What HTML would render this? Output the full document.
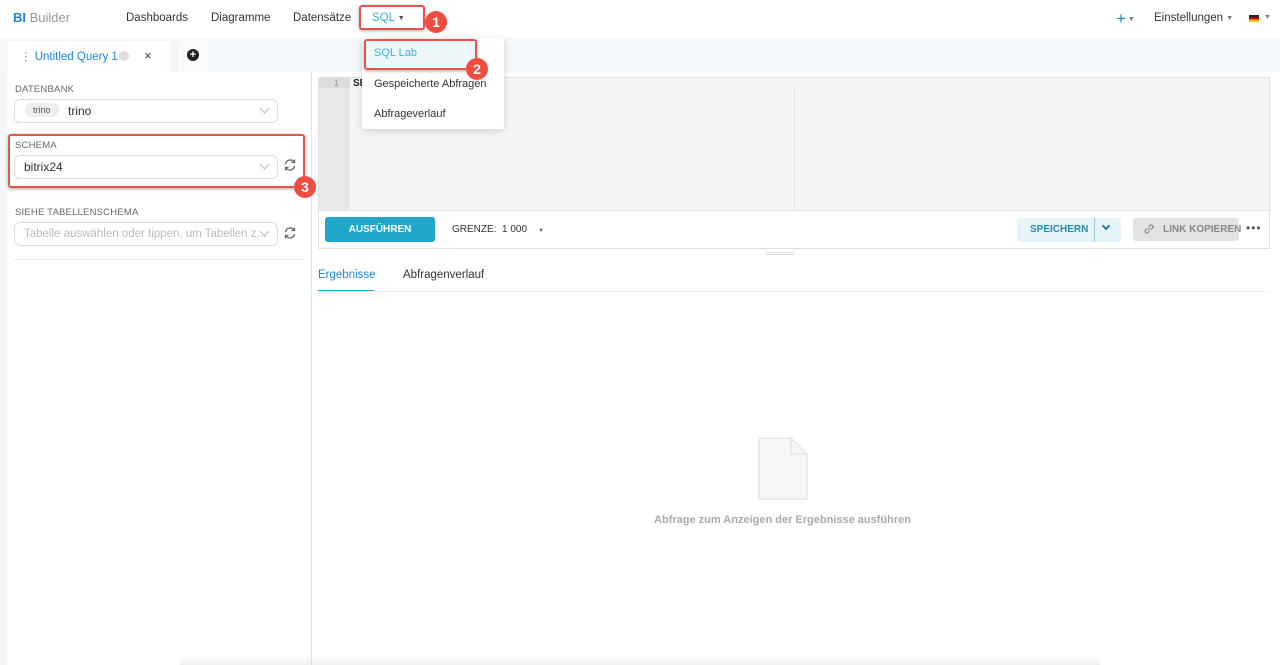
<!DOCTYPE html>
<html><head><meta charset="utf-8"><style>
*{box-sizing:border-box;margin:0;padding:0}
body{width:1280px;height:665px;overflow:hidden;background:#fff;font-family:"Liberation Sans",sans-serif;color:#333;position:relative;font-size:12px}
.a{position:absolute}
.nav{font-size:11.5px;color:#333;top:12px}
.lbl{font-size:9.5px;color:#666;letter-spacing:.2px}
.sel{border:1px solid #ddd;border-radius:6px;background:#fff;height:24px}
.chev{position:absolute;right:9px;top:5px;width:7px;height:7px;border-right:1px solid #bbb;border-bottom:1px solid #bbb;transform:rotate(45deg)}
.red{border:2px solid #e4544b;border-radius:3px;box-shadow:0 1px 3px rgba(0,0,0,.35)}
.badge{width:22px;height:22px;border-radius:50%;background:#ef4d3f;color:#fff;font-size:14px;text-align:center;line-height:22px;font-weight:bold}
</style></head><body>
<div class="a" style="left:13px;top:10px;font-size:13px"><b style="color:#1f86d6">BI</b> <span style="color:#999">Builder</span></div>
<div class="a nav" style="left:126px">Dashboards</div>
<div class="a nav" style="left:211px">Diagramme</div>
<div class="a nav" style="left:293px">Datensätze</div>
<div class="a red" style="left:359px;top:5px;width:66px;height:25px"></div>
<div class="a nav" style="left:372px;color:#3fb0d0">SQL <span style="font-size:7px;color:#555;vertical-align:1px">▼</span></div>
<div class="a badge" style="left:425px;top:11px">1</div>
<div class="a" style="left:1116px;top:9px;font-size:17px;color:#1a8fb5">+<span style="font-size:7px;color:#777;vertical-align:3px"> ▼</span></div>
<div class="a nav" style="left:1154px">Einstellungen <span style="font-size:7px;color:#777;vertical-align:1px">▼</span></div>
<div class="a" style="left:1249px;top:15px;width:10px;height:7px;background:linear-gradient(#222 33%,#d00 33%,#d00 66%,#f5c400 66%)"></div>
<div class="a" style="left:1264px;top:14px;font-size:7px;color:#777">▼</div>
<div class="a" style="left:0;top:38px;width:1280px;height:34px;background:#f3f7f9"></div>
<div class="a" style="left:8px;top:41px;width:163px;height:33px;background:#fff"></div>
<div class="a" style="left:20px;top:49px;font-size:11.5px;color:#1f86d6"><span style="color:#888">⋮</span> Untitled Query 1</div>
<div class="a" style="left:119px;top:51px;width:10px;height:10px;border-radius:50%;background:#ddd"></div>
<div class="a" style="left:144px;top:48px;font-size:13px;color:#444">×</div>
<div class="a" style="left:179px;top:41px;width:29px;height:31px;background:#fafcfd"></div>
<div class="a" style="left:187px;top:49px;width:12px;height:12px;border-radius:50%;background:#222;color:#fff;font-size:11px;line-height:12px;text-align:center;font-weight:bold">+</div>
<div class="a" style="left:0;top:72px;width:7px;height:593px;background:#f3f7f9"></div>
<div class="a" style="left:311px;top:72px;width:1px;height:593px;background:#e6e6e6"></div>
<div class="a lbl" style="left:15px;top:84px">DATENBANK</div>
<div class="a sel" style="left:14px;top:99px;width:264px"><span class="a" style="left:10px;top:3px;background:#eee;border-radius:9px;padding:2px 8px;font-size:9px;color:#555">trino</span><span class="a" style="left:53px;top:4px;font-size:12px">trino</span><span class="chev"></span></div>
<div class="a lbl" style="left:15px;top:140px">SCHEMA</div>
<div class="a sel" style="left:14px;top:155px;width:264px"><span class="a" style="left:9px;top:4px;font-size:12px">bitrix24</span><span class="chev"></span></div>
<svg class="a" style="left:283px;top:158px" width="14" height="14" viewBox="0 0 14 14" fill="none" stroke="#666" stroke-width="1.3"><path d="M2.5 6A4.6 4.6 0 0 1 11 4.2"/><path d="M11.5 1.5V4.5H8.5"/><path d="M11.5 8A4.6 4.6 0 0 1 3 9.8"/><path d="M2.5 12.5V9.5H5.5"/></svg>
<div class="a red" style="left:8px;top:134px;width:297px;height:54px"></div>
<div class="a badge" style="left:294px;top:176px">3</div>
<div class="a lbl" style="left:15px;top:207px">SIEHE TABELLENSCHEMA</div>
<div class="a sel" style="left:14px;top:222px;width:264px"><span class="a" style="left:9px;top:5px;font-size:11.5px;color:#bbb;white-space:nowrap">Tabelle auswählen oder tippen, um Tabellen z...</span><span class="chev"></span></div>
<svg class="a" style="left:283px;top:226px" width="14" height="14" viewBox="0 0 14 14" fill="none" stroke="#666" stroke-width="1.3"><path d="M2.5 6A4.6 4.6 0 0 1 11 4.2"/><path d="M11.5 1.5V4.5H8.5"/><path d="M11.5 8A4.6 4.6 0 0 1 3 9.8"/><path d="M2.5 12.5V9.5H5.5"/></svg>
<div class="a" style="left:14px;top:259px;width:289px;height:1px;background:#eee"></div>
<div class="a" style="left:318px;top:77px;width:952px;height:172px;border:1px solid #e0e0e0;background:#fff"></div>
<div class="a" style="left:319px;top:78px;width:950px;height:132px;background:#f5f5f5"></div>
<div class="a" style="left:319px;top:78px;width:31px;height:132px;background:#e8e8e8"></div>
<div class="a" style="left:319px;top:78px;width:31px;height:10px;background:#dcdcdc"></div>
<div class="a" style="left:334px;top:78px;font-size:9px;color:#999">1</div>
<div class="a" style="left:353px;top:78px;font-size:10px;font-weight:bold;color:#222">SE</div>
<div class="a" style="left:794px;top:88px;width:1px;height:122px;background:#e3e3e3"></div>
<div class="a" style="left:319px;top:210px;width:950px;height:1px;background:#e4e4e4"></div>
<div class="a" style="left:325px;top:217px;width:110px;height:25px;background:#20a7c9;border-radius:3px;color:#fff;font-size:10px;font-weight:bold;text-align:center;line-height:25px">AUSFÜHREN</div>
<div class="a" style="left:452px;top:224px;font-size:10px;color:#333">GRENZE:&nbsp; 1 000 &nbsp;&nbsp;&nbsp;<span style="font-size:6px;color:#666">▼</span></div>
<div class="a" style="left:1017px;top:218px;width:104px;height:24px;background:#e4f4f9;border-radius:3px"></div>
<div class="a" style="left:1030px;top:224px;font-size:10px;font-weight:bold;color:#2a8aa8">SPEICHERN</div>
<div class="a" style="left:1094px;top:218px;width:1px;height:24px;background:#9cc7d5"></div>
<div class="a" style="left:1103px;top:223px;width:6px;height:6px;border-right:2px solid #2a7a98;border-bottom:2px solid #2a7a98;transform:rotate(45deg)"></div>
<div class="a" style="left:1133px;top:218px;width:106px;height:23px;background:#e3e3e3;border-radius:3px"></div>
<svg class="a" style="left:1142px;top:222px" width="14" height="14" viewBox="0 0 14 14" fill="none" stroke="#888" stroke-width="1.2"><path d="M6 8L8 6"/><path d="M5 6.5L3 8.5A2.1 2.1 0 0 0 5.5 11L7.5 9"/><path d="M9 7.5L11 5.5A2.1 2.1 0 0 0 8.5 3L6.5 5"/></svg>
<div class="a" style="left:1163px;top:224px;font-size:10px;font-weight:bold;color:#888">LINK KOPIEREN</div>
<div class="a" style="left:1246px;top:221px;font-size:12px;color:#555;letter-spacing:1px">•••</div>
<div class="a" style="left:766px;top:252px;width:28px;height:3px;border-top:1px solid #ddd;border-bottom:1px solid #ddd"></div>
<div class="a" style="left:318px;top:269px;font-size:11.5px;color:#1f86d6">Ergebnisse</div>
<div class="a" style="left:318px;top:290px;width:56px;height:2px;background:#20a7c9"></div>
<div class="a" style="left:403px;top:269px;font-size:11.5px;color:#333">Abfragenverlauf</div>
<div class="a" style="left:318px;top:291px;width:952px;height:1px;background:#eee"></div>
<svg class="a" style="left:758px;top:437px" width="50" height="63"><path d="M1 1H33L49 17V62H1Z" fill="#f7f7f7" stroke="#ddd"/><path d="M33 1V17H49" fill="none" stroke="#ddd"/></svg>
<div class="a" style="left:640px;top:514px;width:285px;text-align:center;font-size:11px;color:#aaa;font-weight:bold">Abfrage zum Anzeigen der Ergebnisse ausführen</div>
<div class="a" style="left:180px;top:655px;width:920px;height:10px;background:linear-gradient(rgba(0,0,0,0),rgba(0,0,0,.06))"></div>
<div class="a" style="left:362px;top:38px;width:142px;height:91px;background:#fff;border-radius:3px;box-shadow:0 2px 8px rgba(0,0,0,.15)"></div>
<div class="a" style="left:365px;top:40px;width:112px;height:30px;background:#eef7fa"></div>
<div class="a red" style="left:364px;top:39px;width:113px;height:31px"></div>
<div class="a" style="left:374px;top:47px;font-size:11px;color:#3fb0d0">SQL Lab</div>
<div class="a" style="left:374px;top:78px;font-size:11px;color:#333">Gespeicherte Abfragen</div>
<div class="a" style="left:374px;top:108px;font-size:11px;color:#333">Abfrageverlauf</div>
<div class="a badge" style="left:466px;top:58px">2</div>
</body></html>
